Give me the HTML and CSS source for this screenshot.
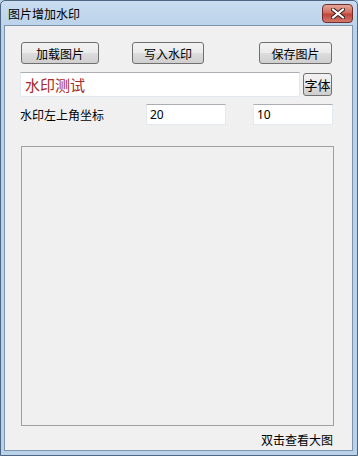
FILE: index.html
```html
<!DOCTYPE html>
<html lang="zh-CN">
<head>
    <meta charset="UTF-8">
    <meta name="viewport" content="width=device-width, initial-scale=1.0">
    <title>图片增加水印</title>
    <link rel="stylesheet" href="styles.css">
</head>
<body>
    <div class="window">
        <div class="titlebar">
            <span class="title">图片增加水印</span>
            <span class="close">
                <svg width="14" height="11" viewBox="0 0 14 11">
                    <path d="M2 1.5 L12 9.5 M12 1.5 L2 9.5" stroke="#3a2020" stroke-width="4" stroke-linecap="square"/>
                    <path d="M2 1.5 L12 9.5 M12 1.5 L2 9.5" stroke="#ffffff" stroke-width="2" stroke-linecap="square"/>
                </svg>
            </span>
        </div>

        <div class="client">
            <div class="row btns">
                <button class="btn b1">加载图片</button>
                <button class="btn b2">写入水印</button>
                <button class="btn b3">保存图片</button>
            </div>

            <div class="row textrow">
                <input type="text" class="mark" value="水印测试">
                <button class="btn fontbtn">字体</button>
            </div>

            <div class="row posrow">
                <span class="label">水印左上角坐标</span>
                <input type="text" class="pos px" value="20">
                <input type="text" class="pos py" value="10">
            </div>

            <div class="picture"></div>

            <div class="hint">双击查看大图</div>
        </div>
    </div>
</body>
</html>
```

FILE: styles.css
```css
*{
    box-sizing: border-box;
    margin: 0;
    font-family: "Noto Sans CJK SC", "Noto Sans", sans-serif;
}
body{
    width: 358px;
    height: 456px;
    overflow: hidden;
    background: #bcd3ea;
}
.window{
    width: 358px;
    height: 456px;
    border: 1px solid #4d6782;
    border-radius: 5px 5px 0 0;
    background: linear-gradient(#c9dcf0, #b9d1ea 30px);
    display: flex;
    flex-direction: column;
    padding: 0 4px 4px 3px;
}
.titlebar{
    height: 24px;
    display: flex;
    align-items: center;
    justify-content: space-between;
    flex-shrink: 0;
}
.title{
    font-size: 12px;
    color: #000;
    margin-left: 4px;
}
.close{
    width: 31px;
    height: 19px;
    margin-top: 1px;
    border: 1px solid #6d2e2e;
    border-radius: 4px;
    background: linear-gradient(#e5a79b, #d26b5e 45%, #c0443a 55%, #d3776a);
    display: flex;
    align-items: center;
    justify-content: center;
}
.client{
    flex: 1;
    background: #f0f0f0;
    border: 1px solid #7e95ad;
    padding: 0 0 0 15px;
    display: flex;
    flex-direction: column;
}
.row{
    display: flex;
    align-items: center;
}
.btn{
    height: 22px;
    font-size: 12px;
    color: #000;
    border: 1px solid #707070;
    border-radius: 3px;
    background: linear-gradient(#f2f2f2, #ebebeb 50%, #dddddd 50%, #cfcfcf);
    padding: 0;
}
.btns{
    margin-top: 16px;
}
.b1{
    width: 78px;
    margin-left: 1px;
}
.b2{
    width: 72px;
    margin-left: 33px;
}
.b3{
    width: 73px;
    margin-left: 55px;
}
.textrow{
    margin-top: 8px;
    align-items: flex-start;
}
.mark{
    width: 280px;
    height: 25px;
    border: 1px solid #e3e9ef;
    border-top-color: #abadb3;
    background: #fff;
    color: #a52a2a;
    font-size: 15px;
    padding: 0 0 0 4px;
    outline: none;
}
.fontbtn{
    width: 29px;
    height: 23px;
    margin-left: 3px;
    margin-top: 1px;
    font-size: 13px;
}
.posrow{
    margin-top: 7px;
    height: 21px;
}
.label{
    font-size: 12px;
    width: 126px;
    color: #000;
}
.pos{
    width: 80px;
    height: 21px;
    border: 1px solid #e3e9ef;
    border-top-color: #abadb3;
    background: #fff;
    font-size: 12px;
    font-family: "Noto Sans", sans-serif;
    padding: 0 0 0 3px;
    outline: none;
}
.py{
    margin-left: 27px;
}
.picture{
    width: 313px;
    height: 280px;
    margin-top: 21px;
    margin-left: 1px;
    border: 1px solid #a0a0a0;
}
.hint{
    font-size: 12px;
    width: 313px;
    text-align: right;
    margin-top: 5px;
    color: #000;
}
```
